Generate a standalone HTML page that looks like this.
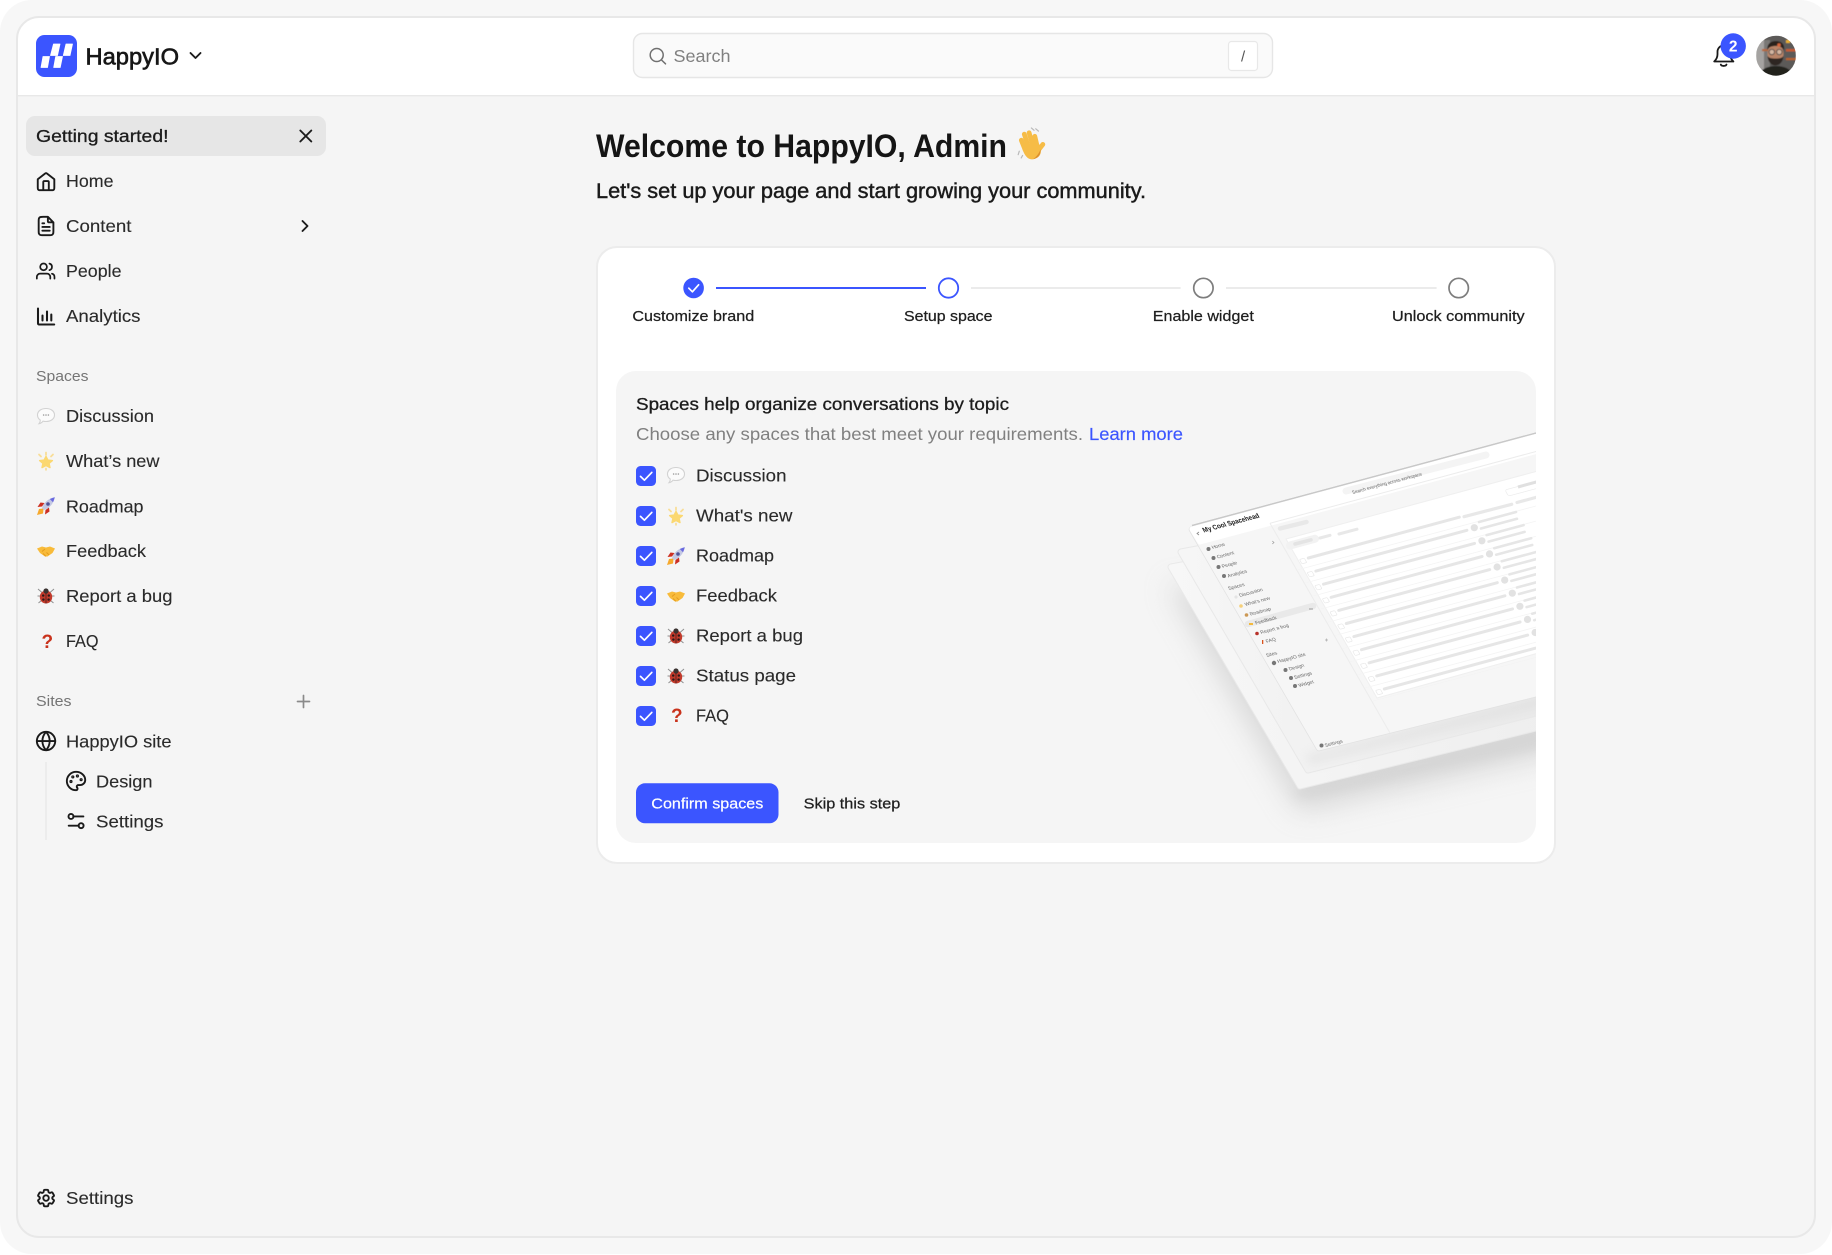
<!DOCTYPE html>
<html lang="en">
<head>
<meta charset="utf-8">
<title>HappyIO</title>
<style>
html,body{margin:0;padding:0;background:#fff;width:1832px;height:1255px;overflow:hidden}
svg{display:block}
text{font-family:"Liberation Sans",Arial,sans-serif;white-space:pre}
.t{font-size:17.5px;fill:#2a2a2a;stroke:#2a2a2a;stroke-width:.12}
.m{font-size:17.5px;fill:#1c1c1c;stroke:#1c1c1c;stroke-width:.3}
.s{font-size:15.2px;fill:#1f1f1f;stroke:#1f1f1f;stroke-width:.25}
.g{font-size:15.2px;fill:#757575}
.i{fill:none;stroke:#1a1a1a;stroke-width:2.05;stroke-linecap:round;stroke-linejoin:round}
.p{font-size:5px;fill:#666}
</style>
</head>
<body>
<svg xmlns="http://www.w3.org/2000/svg" width="1832" height="1255" viewBox="0 0 1832 1255">
<defs>
<clipPath id="panelClip"><rect x="616" y="371" width="920" height="472" rx="20"/></clipPath>
<clipPath id="avClip"><circle cx="1776" cy="55.7" r="20"/></clipPath>
<clipPath id="frameClip"><rect x="17" y="17" width="1798" height="1220" rx="22"/></clipPath>
<filter id="b14" x="-30%" y="-30%" width="160%" height="160%"><feGaussianBlur stdDeviation="14"/></filter>
<filter id="b6" x="-30%" y="-30%" width="160%" height="160%"><feGaussianBlur stdDeviation="5"/></filter>
<filter id="b1"><feGaussianBlur stdDeviation=".6"/></filter>
<linearGradient id="sh3" x1="0" y1="0" x2="1" y2="0"><stop offset="0" stop-color="#f7f7f7"/><stop offset="1" stop-color="#eeeeee"/></linearGradient>
<linearGradient id="sh2" x1="0" y1="0" x2="1" y2="0"><stop offset="0" stop-color="#f6f6f6"/><stop offset="1" stop-color="#e9e9e9"/></linearGradient>

<g id="e1"><path d="M-8.5-1c0-4 3.8-6.5 8.5-6.500S8.500-5 8.500-1 4.700 5.500 0 5.500c-1 0-2-.1-2.900-.4-1 1.200-2.600 2.400-4.100 2.600.8-1 1.300-2.200 1.300-3.600C-7.400 3-8.500 1-8.500-1z" fill="#fbfbfb" stroke="#d2d2d2" stroke-width="1.100"/><circle cx="-2.400" cy="-1" r=".8" fill="#9a9a9a"/><circle cx="0" cy="-1" r=".8" fill="#9a9a9a"/><circle cx="2.400" cy="-1" r=".8" fill="#9a9a9a"/></g>
<g id="e2"><path d="M0-4.600 1.900-.9 6.400-.4 3.100 2.400 4 6.600 0 4.500-4 6.600-3.100 2.400-6.400-.4-1.900-.9z" fill="#fbd871" stroke="#fbd871" stroke-width="1.400" stroke-linejoin="round"/><path d="M0-8.500v2.500M-7-6.500l2 2M7-6.500l-2 2M0 7.500v1.400" stroke="#f8de98" stroke-width="1.800" stroke-linecap="round"/></g>
<g id="e3"><path d="M-3 2.500-7 3-9 9-3 7.500-2.500 3z" fill="#f6a92d"/><path d="M-4 .5-8.500 1-5.500-3.500-1.500-3zM-.5 4-1 8.500 3.500 5.500 3 1.500z" fill="#cc3024"/><path d="M-4 2C-2.500-3 2-7.500 8.800-8.800 7.500-2 3 2.500-2 4z" fill="#c4c8e4"/><path d="M3.800-7C6-8 7.500-8.500 8.800-8.800 8.500-7.500 8-6 7-3.800z" fill="#6a6adf"/><circle cx="2" cy="-2" r="1.800" fill="#4f5398"/></g>
<g id="e4"><path d="M-9-2.500-4-4.500 0-3.500 4-4.500 9-2.500 6.500 2 1.500 5.500-1 5.500-6 2z" fill="#f8bb3a"/><path d="M-1-2-4 .5M0 5.400-3 2.500M3 3.800 .5 1.500" stroke="#e39a1e" stroke-width=".9" fill="none"/></g>
<g id="e5"><path d="M-8-7-4-3.500M8-7 4-3.500M-8.500 0h4M8.500 0h-4M-7.500 7-4 4M7.500 7 4 4" stroke="#8f8f8f" stroke-width="1" fill="none"/><ellipse cx="0" cy="1" rx="6.200" ry="6.500" fill="#c23a2b"/><circle cx="0" cy="-5" r="2.600" fill="#3a3230"/><circle cx="-2.800" cy="-.4" r="1.200" fill="#2a1a1a"/><circle cx="2.800" cy="-.4" r="1.200" fill="#2a1a1a"/><circle cx="-2.600" cy="3.600" r="1.200" fill="#2a1a1a"/><circle cx="2.600" cy="3.600" r="1.200" fill="#2a1a1a"/><path d="M0-3V7.500" stroke="#3a1a1a" stroke-width=".7"/></g>
<g id="ck"><rect x="-10" y="-10" width="20" height="20" rx="4.500" fill="#3b55ff"/><path d="M-5.500 .4-1.600 4.200 5.800-3.600" fill="none" stroke="#fff" stroke-width="1.700" stroke-linecap="round" stroke-linejoin="round"/></g>

<path id="gear" d="M9.594 3.940c.09-.542.56-.94 1.110-.94h2.593c.55 0 1.020.398 1.110.94l.213 1.281c.063.374.313.686.645.870.074.04.147.083.22.127.324.196.72.257 1.075.124l1.217-.456a1.125 1.125 0 011.370.49l1.296 2.247a1.125 1.125 0 01-.26 1.431l-1.003.827c-.293.24-.438.613-.431.992a6.759 6.759 0 010 .255c-.007.378.138.75.43.99l1.005.828c.424.35.534.954.26 1.430l-1.298 2.247a1.125 1.125 0 01-1.369.491l-1.217-.456c-.355-.133-.75-.072-1.076.124a6.570 6.570 0 01-.22.128c-.331.183-.581.495-.644.869l-.213 1.280c-.09.543-.56.941-1.110.941h-2.594c-.55 0-1.020-.398-1.110-.94l-.213-1.281c-.062-.374-.312-.686-.644-.87a6.520 6.520 0 01-.22-.127c-.325-.196-.72-.257-1.076-.124l-1.217.456a1.125 1.125 0 01-1.369-.49l-1.297-2.247a1.125 1.125 0 01.26-1.431l1.004-.827c.292-.24.437-.613.43-.992a6.932 6.932 0 010-.255c.007-.378-.138-.75-.43-.99l-1.004-.828a1.125 1.125 0 01-.26-1.430l1.297-2.247a1.125 1.125 0 011.370-.491l1.216.456c.356.133.751.072 1.076-.124.072-.044.146-.087.22-.128.332-.183.582-.495.644-.869l.214-1.281zM15 12a3 3 0 11-6 0 3 3 0 016 0z"/>

<g id="row" fill="none">
<line x1="1308.300" y1="558" x2="1459.300" y2="517.200" stroke="#e6e6e6" stroke-width="3" stroke-linecap="round"/>
<rect width="5" height="5" rx="1" x="0" y="0" transform="matrix(.966 -.26 .49 .87 1299.500 559.500)" fill="#fff" stroke="#e8e8e8" stroke-width=".7"/>
<line x1="1297" y1="570" x2="1536" y2="506" stroke="#f4f4f4" stroke-width=".8"/>
</g>
<g id="tail" fill="none">
<circle cx="1474.300" cy="527.700" r="3.600" fill="#e2e2e2"/>
<line x1="1479" y1="522" x2="1516" y2="512" stroke="#e6e6e6" stroke-width="2.600" stroke-linecap="round"/>
<line x1="1481" y1="528.500" x2="1517" y2="518.800" stroke="#e6e6e6" stroke-width="2.600" stroke-linecap="round"/>
</g>
</defs>

<!-- page -->
<rect width="1832" height="1255" fill="#fff"/>
<rect x="0" y="0" width="1832" height="1254" rx="32" fill="#f7f7f7"/>
<rect x="17" y="17" width="1798" height="1220" rx="22" fill="#f5f5f5"/>
<g clip-path="url(#frameClip)">
<rect x="17" y="17" width="1798" height="78" fill="#fff"/>
<rect x="17" y="95" width="1798" height="1.400" fill="#e8e8e8"/>
</g>
<rect x="17" y="17" width="1798" height="1220" rx="22" fill="none" stroke="#e8e8e8" stroke-width="2"/>

<!-- brand -->
<rect x="36" y="35" width="41" height="42" rx="8.500" fill="#3b55ff"/>
<g fill="#fff" stroke="#fff" stroke-width=".8" stroke-linejoin="round">
<polygon points="53.500,44 60,44 57.500,55.500 50.500,55.500"/>
<polygon points="66,44 72.500,44 70,55.500 63.300,55.500"/>
<polygon points="43,56.500 49.500,56.500 47.500,67.500 41,67.500"/>
<polygon points="55.700,56.500 62.500,56.500 60.200,67.500 53.700,67.500"/>
</g>
<text x="85.500" y="64.500" font-size="23.400" fill="#171717" stroke="#171717" stroke-width=".65" textLength="93.500" lengthAdjust="spacingAndGlyphs">HappyIO</text>
<path d="M190.500 53 195.500 58 200.500 53" fill="none" stroke="#1c1c1c" stroke-width="1.900" stroke-linecap="round" stroke-linejoin="round"/>

<!-- search -->
<rect x="633.500" y="33.500" width="639" height="44" rx="9" fill="#fafafa" stroke="#e6e6e6" stroke-width="1.400"/>
<circle cx="656.700" cy="55" r="6.500" fill="none" stroke="#707070" stroke-width="1.500"/>
<path d="M661.500 60 665.500 63.800" stroke="#707070" stroke-width="1.500" stroke-linecap="round"/>
<text x="673.500" y="62" font-size="17.500" fill="#808080" textLength="57" lengthAdjust="spacingAndGlyphs">Search</text>
<rect x="1228.500" y="41.500" width="29" height="29" rx="3" fill="#fff" stroke="#e8e8e8" stroke-width="1.200"/>
<text x="1241" y="61.500" font-size="15" fill="#555">/</text>

<!-- bell & avatar -->
<path d="M1714.200 61.500c2.200-2 3.300-4.200 3.300-7.200v-2.600a6.300 6.300 0 0 1 12.600 0v2.600c0 3 1.100 5.200 3.300 7.200z" fill="none" stroke="#1a1a1a" stroke-width="1.800" stroke-linejoin="round"/>
<path d="M1720.800 64.600c.7 1.800 5 1.800 5.700 0" fill="none" stroke="#1a1a1a" stroke-width="1.800" stroke-linecap="round"/>
<circle cx="1733.200" cy="46" r="12.700" fill="#3b55ff"/>
<text x="1733.200" y="51.500" font-size="15.500" font-weight="700" fill="#fff" text-anchor="middle">2</text>
<g clip-path="url(#avClip)">
<g filter="url(#b1)">
<rect x="1756" y="35" width="40" height="42" fill="#5c5a58"/>
<rect x="1756" y="35" width="8" height="42" fill="#a5a3a1"/>
<rect x="1764" y="40" width="6" height="32" fill="#7a7876"/>
<rect x="1786" y="49" width="11" height="2.500" fill="#c45a30"/>
<rect x="1786" y="58" width="11" height="2.200" fill="#b8622f"/>
<rect x="1762" y="49" width="6" height="2.200" fill="#b5683e"/>
<rect x="1786" y="40" width="4" height="3" fill="#e8b030"/>
<path d="M1758 77c2-8 10-11 18-11s16 3 18 11z" fill="#22201d"/>
<ellipse cx="1775.500" cy="54" rx="8" ry="10.500" fill="#b98468"/>
<path d="M1767.300 50c-.5-6 3.500-9 8.700-9 5 0 9 3 8 9-2-3-4.500-4-8.500-4s-6.500 1-8.200 4z" fill="#2a211d"/>
<circle cx="1779" cy="45" r="1.800" fill="#d8663a"/>
<path d="M1767.500 56c.5 6 4 9.500 8 9.500s7.500-3.500 8-9.500c-1.500 2-3.500 2.500-8 2.500s-6.500-.5-8-2.500z" fill="#2f2723"/>
<circle cx="1771.800" cy="52" r="2.700" fill="#d4b5a0" stroke="#444" stroke-width=".9"/>
<circle cx="1779.300" cy="52" r="2.700" fill="#d4b5a0" stroke="#444" stroke-width=".9"/>
</g>
</g>

<!-- sidebar -->
<rect x="26" y="116" width="300" height="40" rx="9" fill="#e6e6e6"/>
<text x="36" y="142" class="m" textLength="132.500" lengthAdjust="spacingAndGlyphs">Getting started!</text>
<path d="M300.300 130.500 311.300 141.500M311.300 130.500 300.300 141.500" fill="none" stroke="#1c1c1c" stroke-width="1.900" stroke-linecap="round"/>

<g transform="translate(35 170) scale(.92)" class="i"><path d="M9 21v-7.400c0-.56 0-.84.11-1.050.1-.19.25-.34.44-.44.21-.11.49-.11 1.050-.11h2.800c.56 0 .84 0 1.050.11.19.1.34.25.44.44.11.21.11.49.11 1.050V21"/><path d="M3 10.100l8.040-6.250c.35-.27.52-.4.71-.45.17-.05.34-.05.51 0 .19.05.36.18.71.45L21 10.100v8.700c0 1.120 0 1.680-.22 2.110-.19.38-.5.68-.87.87-.43.22-.99.22-2.110.22H6.200c-1.120 0-1.680 0-2.110-.22a2 2 0 0 1-.87-.87C3 20.480 3 19.920 3 18.800z"/></g>
<text x="66" y="187" class="t" textLength="47.500" lengthAdjust="spacingAndGlyphs">Home</text>

<g transform="translate(35 215) scale(.92)" class="i"><path d="M14 2.270V6.400c0 .56 0 .84.11 1.050.1.19.25.34.44.44.21.11.49.11 1.050.11h4.130M16 13H8M16 17H8M10 9H8M14 2H8.800c-1.680 0-2.520 0-3.160.33-.56.29-1.020.75-1.310 1.310C4 4.280 4 5.120 4 6.800v10.400c0 1.680 0 2.520.33 3.160.29.56.75 1.020 1.310 1.310.64.33 1.480.33 3.160.33h6.400c1.680 0 2.520 0 3.160-.33.56-.29 1.020-.75 1.310-1.310.33-.64.33-1.480.33-3.160V8z"/></g>
<text x="66" y="232" class="t" textLength="65.500" lengthAdjust="spacingAndGlyphs">Content</text>
<path d="M302.500 221 307.500 226 302.500 231" fill="none" stroke="#1c1c1c" stroke-width="1.900" stroke-linecap="round" stroke-linejoin="round"/>

<g transform="translate(36 261) scale(.84)" class="i" stroke-width="2.250"><path d="M22 21v-2a4 4 0 0 0-3-3.870M16 3.130a4 4 0 0 1 0 7.750M17 21v-2a4 4 0 0 0-4-4H5a4 4 0 0 0-4 4v2"/><circle cx="9" cy="7" r="4"/></g>
<text x="66" y="277" class="t" textLength="55.500" lengthAdjust="spacingAndGlyphs">People</text>

<g class="i" stroke-width="1.900"><path d="M38 308.500v14.800c0 .7.500 1.200 1.200 1.200h15"/><path d="M42.500 320.500v-5M47 320.500v-9M51.300 320.500v-6"/></g>
<text x="66" y="322" class="t" textLength="74.500" lengthAdjust="spacingAndGlyphs">Analytics</text>

<text x="36" y="381" class="g" textLength="52.500" lengthAdjust="spacingAndGlyphs">Spaces</text>
<use href="#e1" x="46" y="416"/>
<text x="66" y="422" class="t" textLength="88" lengthAdjust="spacingAndGlyphs">Discussion</text>
<use href="#e2" x="46" y="461"/>
<text x="66" y="467" class="t" textLength="93.500" lengthAdjust="spacingAndGlyphs">What’s new</text>
<use href="#e3" x="46" y="506"/>
<text x="66" y="512.300" class="t" textLength="77.500" lengthAdjust="spacingAndGlyphs">Roadmap</text>
<use href="#e4" x="46" y="551"/>
<text x="66" y="557" class="t" textLength="80" lengthAdjust="spacingAndGlyphs">Feedback</text>
<use href="#e5" x="46" y="596"/>
<text x="66" y="602" class="t" textLength="106.500" lengthAdjust="spacingAndGlyphs">Report a bug</text>
<text x="41.500" y="648" font-family="Liberation Serif" font-size="19" font-weight="700" fill="#c9321c">?</text>
<text x="66" y="647" class="t" textLength="32.500" lengthAdjust="spacingAndGlyphs">FAQ</text>

<text x="36" y="706" class="g" textLength="35.500" lengthAdjust="spacingAndGlyphs">Sites</text>
<path d="M303.500 695.500v12M297.500 701.500h12" stroke="#8a8a8a" stroke-width="1.700" stroke-linecap="round"/>

<g transform="translate(35 730) scale(.92)" class="i"><circle cx="12" cy="12" r="10"/><path d="M2 12h20M12 2a15.300 15.300 0 0 1 4 10 15.300 15.300 0 0 1-4 10 15.300 15.300 0 0 1-4-10 15.300 15.300 0 0 1 4-10z"/></g>
<text x="66" y="747.500" class="t" textLength="105.500" lengthAdjust="spacingAndGlyphs">HappyIO site</text>
<line x1="46" y1="762" x2="46" y2="840" stroke="#e8e8e8" stroke-width="1.300"/>

<g transform="translate(65 770) scale(.92)" class="i"><path d="M12 2C6.500 2 2 6.500 2 12s4.500 10 10 10c.926 0 1.648-.746 1.648-1.688 0-.437-.18-.835-.437-1.125-.29-.289-.438-.652-.438-1.125a1.640 1.640 0 0 1 1.668-1.668h1.996c3.051 0 5.555-2.503 5.555-5.554C21.965 6.012 17.461 2 12 2z"/><circle cx="13.500" cy="6.500" r=".7"/><circle cx="17.500" cy="10.500" r=".7"/><circle cx="8.500" cy="7.500" r=".7"/><circle cx="6.500" cy="12.500" r=".7"/></g>
<text x="96" y="787.500" class="t" textLength="56.500" lengthAdjust="spacingAndGlyphs">Design</text>

<g transform="translate(65 810) scale(.92)" class="i"><path d="M9 7h11M4 17h11"/><circle cx="6.500" cy="7" r="2.700"/><circle cx="17.500" cy="17" r="2.700"/></g>
<text x="96" y="827.500" class="t" textLength="67.500" lengthAdjust="spacingAndGlyphs">Settings</text>

<g transform="translate(35 1187) scale(.92)" class="i"><use href="#gear"/></g>
<text x="66" y="1204" class="t" textLength="67.500" lengthAdjust="spacingAndGlyphs">Settings</text>

<!-- welcome -->
<text x="596" y="157" font-size="32.700" font-weight="700" fill="#151515" textLength="411" lengthAdjust="spacingAndGlyphs">Welcome to HappyIO, Admin</text>
<g transform="translate(1030 145) rotate(-16)">
<path d="M-12 3-14 6M-10 8-12 10M10-14 12-11M6-16 8-13" stroke="#b9b9b9" stroke-width="1.200" stroke-linecap="round"/>
<g stroke="#f6bc46" stroke-width="4.800" stroke-linecap="round" fill="none">
<path d="M-6 3-7-7"/><path d="M-2 1-2.500-12"/><path d="M2.500 1 2.500-12"/><path d="M6.500 3 7-7"/><path d="M7 7 12.500 3"/>
</g>
<path d="M-8.500 2 9 1 9 8C8 13 4 15 -1 14.500-6 14-8 9-8.500 2z" fill="#f6bc46"/>
<path d="M9 7C8 12.500 3.500 15 -1 14.500 3 13 6 11 9 7z" fill="#dd8f2e"/>
</g>
<text x="596" y="198" font-size="21" fill="#1a1a1a" stroke="#1a1a1a" stroke-width=".45" textLength="550" lengthAdjust="spacingAndGlyphs">Let's set up your page and start growing your community.</text>

<!-- card -->
<rect x="597" y="247" width="958" height="616" rx="20" fill="#fff" stroke="#ececec" stroke-width="2"/>

<!-- stepper -->
<circle cx="693.600" cy="288" r="10.300" fill="#3b55ff"/>
<path d="M688.800 288.200 692.400 291.800 698.600 284.800" fill="none" stroke="#fff" stroke-width="1.700" stroke-linecap="round" stroke-linejoin="round"/>
<line x1="716" y1="288" x2="926" y2="288" stroke="#3b55ff" stroke-width="2"/>
<circle cx="948.500" cy="288" r="9.700" fill="#fff" stroke="#3b55ff" stroke-width="1.800"/>
<line x1="971" y1="288" x2="1180.600" y2="288" stroke="#e8e8e8" stroke-width="1.800"/>
<circle cx="1203.400" cy="288" r="9.700" fill="#fff" stroke="#7d7d7d" stroke-width="1.700"/>
<line x1="1226" y1="288" x2="1436.600" y2="288" stroke="#e8e8e8" stroke-width="1.800"/>
<circle cx="1458.700" cy="288" r="9.700" fill="#fff" stroke="#7d7d7d" stroke-width="1.700"/>
<text x="632.400" y="321" class="s" textLength="121.800" lengthAdjust="spacingAndGlyphs">Customize brand</text>
<text x="904" y="321" class="s" textLength="88.500" lengthAdjust="spacingAndGlyphs">Setup space</text>
<text x="1152.800" y="321" class="s" textLength="101" lengthAdjust="spacingAndGlyphs">Enable widget</text>
<text x="1392" y="321" class="s" textLength="132.600" lengthAdjust="spacingAndGlyphs">Unlock community</text>

<!-- panel -->
<rect x="616" y="371" width="920" height="472" rx="20" fill="#f5f5f5"/>

<g clip-path="url(#panelClip)">
  <!-- shadows -->
  <polygon points="1168,585 1300,812 1560,752 1560,620" fill="#bcbcbc" opacity=".5" filter="url(#b14)"/>
  <polygon points="1290,792 1560,727 1560,745 1300,800" fill="#c9c9c9" opacity=".3" filter="url(#b6)"/>
  <!-- sheet 3 -->
  <polygon points="1171,567 1300,786 1560,722 1560,495" fill="#e9e9e9" stroke="#e9e9e9" stroke-width="7" stroke-linejoin="round"/>
  <polygon points="1171,567 1300,786 1560,722 1560,495" fill="url(#sh3)" stroke="url(#sh3)" stroke-width="5" stroke-linejoin="round"/>
  <!-- sheet 2 -->
  <polygon points="1181,552 1308,770 1560,707 1560,480" fill="#e8e8e8" stroke="#e8e8e8" stroke-width="7" stroke-linejoin="round"/>
  <polygon points="1181,552 1308,770 1560,707 1560,480" fill="url(#sh2)" stroke="url(#sh2)" stroke-width="5" stroke-linejoin="round"/>
  <polygon points="1305,755 1560,692 1560,702 1310,765" fill="#c9c9c9" opacity=".25" filter="url(#b6)"/>
  <!-- sheet 1 -->
  <polygon points="1192,529.500 1319,748 1560,688 1560,430" fill="#e2e2e2" stroke="#e2e2e2" stroke-width="6.500" stroke-linejoin="round"/>
  <polygon points="1192,529.500 1319,748 1560,688 1560,430" fill="#f6f6f6" stroke="#f6f6f6" stroke-width="5" stroke-linejoin="round"/>
  <line x1="1192" y1="525.500" x2="1560" y2="426.500" stroke="#c8c8c8" stroke-width="1.200"/>
  <polygon points="1192,529 1560,430 1560,445 1270,523.300 1200,542" fill="#fff" stroke="#fff" stroke-width="5" stroke-linejoin="round"/>
  <line x1="1192" y1="525.500" x2="1560" y2="426.500" stroke="#c8c8c8" stroke-width="1.200"/>
  <line x1="1270" y1="523.300" x2="1390" y2="733" stroke="#ececec" stroke-width="1"/>
  <line x1="1270" y1="523.300" x2="1560" y2="445" stroke="#ececec" stroke-width="1"/>

  <!-- header contents -->
  <line x1="1346" y1="491" x2="1486" y2="455" stroke="#f4f4f4" stroke-width="7" stroke-linecap="round"/>
  <text class="p" transform="matrix(.966 -.26 .49 .87 1353 494)" textLength="72" lengthAdjust="spacingAndGlyphs" fill="#999">Search everything across workspace</text>
  <text transform="matrix(.966 -.26 .49 .87 1204 532.500)" font-size="7.300" font-weight="700" fill="#1a1a1a" textLength="58" lengthAdjust="spacingAndGlyphs">My Cool Spacehead</text>
  <path d="M1199 532 1197 533.500 1199 535" fill="none" stroke="#888" stroke-width=".8"/>

  <!-- highlight -->
  <line x1="1248" y1="624" x2="1313" y2="606" stroke="#e9e9e9" stroke-width="6.500" stroke-linecap="round"/>

  <!-- sidebar labels -->
  <g>
  <text class="p" transform="matrix(.966 -.26 .49 .87 1212.700 549)">Home</text>
  <text class="p" transform="matrix(.966 -.26 .49 .87 1217.700 558.500)">Content</text>
  <text class="p" transform="matrix(.966 -.26 .49 .87 1222.700 568)">People</text>
  <text class="p" transform="matrix(.966 -.26 .49 .87 1228.300 577.500)">Analytics</text>
  <text class="p" font-size="4" transform="matrix(.966 -.26 .49 .87 1229 590)" fill="#999">Spaces</text>
  <text class="p" transform="matrix(.966 -.26 .49 .87 1240 597)">Discussion</text>
  <text class="p" transform="matrix(.966 -.26 .49 .87 1245.700 606)">What's new</text>
  <text class="p" transform="matrix(.966 -.26 .49 .87 1250.700 615.700)">Roadmap</text>
  <text class="p" transform="matrix(.966 -.26 .49 .87 1256 624.500)" fill="#333">Feedback</text>
  <text class="p" transform="matrix(.966 -.26 .49 .87 1261.300 634)">Report a bug</text>
  <text class="p" transform="matrix(.966 -.26 .49 .87 1266.700 643)">FAQ</text>
  <text class="p" font-size="4" transform="matrix(.966 -.26 .49 .87 1267 657)" fill="#999">Sites</text>
  <text class="p" transform="matrix(.966 -.26 .49 .87 1278.300 663)">HappyIO site</text>
  <text class="p" transform="matrix(.966 -.26 .49 .87 1289.700 670.500)">Design</text>
  <text class="p" transform="matrix(.966 -.26 .49 .87 1295 679)">Settings</text>
  <text class="p" transform="matrix(.966 -.26 .49 .87 1299.300 687)">Widget</text>
  <text class="p" transform="matrix(.966 -.26 .49 .87 1325.700 747)">Settings</text>
  </g>
  <!-- sidebar tiny icons -->
  <g fill="#777">
  <circle cx="1208.500" cy="549" r="2"/><circle cx="1213.500" cy="558" r="2"/><circle cx="1218.500" cy="567" r="2"/><circle cx="1224" cy="576" r="2"/>
  <circle cx="1236" cy="597" r="1.600" fill="#e4e4e4"/><circle cx="1241" cy="606" r="1.800" fill="#f5d07a"/>
  <circle cx="1246.500" cy="615" r="1.800" fill="#c95"/><rect x="1249" y="623" width="4" height="2" fill="#f3b93d"/>
  <circle cx="1257" cy="633.500" r="1.800" fill="#b8322a"/><rect x="1262" y="640" width="1.300" height="4" fill="#d9541e"/>
  <circle cx="1274" cy="663" r="2.200"/><circle cx="1285.500" cy="670" r="2"/><circle cx="1291" cy="678" r="2"/><circle cx="1295" cy="686" r="2"/><circle cx="1321.500" cy="745.500" r="2"/>
  </g>
  <path d="M1272.300 541 1274 542.500 1272.300 544" fill="none" stroke="#999" stroke-width=".7"/>
  <path d="M1325 640h3M1326.500 638.500v3" stroke="#aaa" stroke-width=".7"/>
  <path d="M1309 609h4" stroke="#888" stroke-width=".8"/>

  <!-- list -->
  <polygon points="1286,539 1560,465 1560,647 1377,698" fill="#fff" stroke="#efefef" stroke-width="1" stroke-linejoin="round"/>
  <line x1="1280" y1="528.500" x2="1306.500" y2="522" stroke="#e8e8e8" stroke-width="4.500" stroke-linecap="round"/>
  <line x1="1290" y1="545.500" x2="1315" y2="538.800" stroke="#f2f2f2" stroke-width="8" stroke-linecap="round"/>
  <line x1="1295" y1="544" x2="1311" y2="539.800" stroke="#e4e4e4" stroke-width="3.500" stroke-linecap="round"/>
  <line x1="1320" y1="538" x2="1330" y2="535.300" stroke="#e8e8e8" stroke-width="3" stroke-linecap="round"/>
  <line x1="1339" y1="534" x2="1357" y2="529.200" stroke="#e8e8e8" stroke-width="3" stroke-linecap="round"/>
  <line x1="1464" y1="516.700" x2="1511.700" y2="504.300" stroke="#e8e8e8" stroke-width="3.200" stroke-linecap="round"/>
  <line x1="1517" y1="502.500" x2="1540" y2="496.300" stroke="#e8e8e8" stroke-width="3.200" stroke-linecap="round"/>
  <rect x="0" y="0" width="40" height="7" rx="2" transform="matrix(.966 -.26 .49 .87 1505 490)" fill="#fff" stroke="#ececec" stroke-width=".7"/>
  <line x1="1518" y1="487" x2="1540" y2="481" stroke="#e0e0e0" stroke-width="3"/>
  <use href="#row"/>
  <use href="#row" x="7.600" y="13.100"/>
  <use href="#row" x="15.200" y="26.200"/>
  <use href="#row" x="22.800" y="39.300"/>
  <use href="#row" x="30.400" y="52.400"/>
  <use href="#row" x="38" y="65.500"/>
  <use href="#row" x="45.600" y="78.600"/>
  <use href="#row" x="53.200" y="91.700"/>
  <use href="#row" x="60.800" y="104.800"/>
  <use href="#row" x="68.400" y="117.900"/>
  <use href="#row" x="76" y="131"/>
  <use href="#tail"/>
  <use href="#tail" x="7.600" y="13.100"/>
  <use href="#tail" x="15.200" y="26.200"/>
  <use href="#tail" x="22.800" y="39.300"/>
  <use href="#tail" x="30.400" y="52.400"/>
  <use href="#tail" x="38" y="65.500"/>
  <use href="#tail" x="45.600" y="78.600"/>
  <use href="#tail" x="53.200" y="91.700"/>
  <use href="#tail" x="60.800" y="104.800"/>
</g>

<!-- panel text -->
<text x="636" y="410" class="m" textLength="373" lengthAdjust="spacingAndGlyphs">Spaces help organize conversations by topic</text>
<text x="636" y="440" font-size="17.500" fill="#808080" textLength="447" lengthAdjust="spacingAndGlyphs">Choose any spaces that best meet your requirements.</text>
<text x="1089" y="440" font-size="17.500" fill="#3b55ff" stroke="#3b55ff" stroke-width=".15" textLength="94" lengthAdjust="spacingAndGlyphs">Learn more</text>

<use href="#ck" x="646" y="476"/><use href="#e1" x="676" y="475"/>
<text x="696" y="481.500" class="t" textLength="90.500" lengthAdjust="spacingAndGlyphs">Discussion</text>
<use href="#ck" x="646" y="516"/><use href="#e2" x="676" y="516"/>
<text x="696" y="521.500" class="t" textLength="96.500" lengthAdjust="spacingAndGlyphs">What's new</text>
<use href="#ck" x="646" y="556"/><use href="#e3" x="676" y="556"/>
<text x="696" y="561.500" class="t" textLength="78" lengthAdjust="spacingAndGlyphs">Roadmap</text>
<use href="#ck" x="646" y="596"/><use href="#e4" x="676" y="596"/>
<text x="696" y="601.500" class="t" textLength="81" lengthAdjust="spacingAndGlyphs">Feedback</text>
<use href="#ck" x="646" y="636"/><use href="#e5" x="676" y="636"/>
<text x="696" y="641.500" class="t" textLength="107" lengthAdjust="spacingAndGlyphs">Report a bug</text>
<use href="#ck" x="646" y="676"/><use href="#e5" x="676" y="676"/>
<text x="696" y="681.500" class="t" textLength="100" lengthAdjust="spacingAndGlyphs">Status page</text>
<use href="#ck" x="646" y="716"/>
<text x="671" y="722" font-family="Liberation Serif" font-size="19" font-weight="700" fill="#c9321c">?</text>
<text x="696" y="721.500" class="t" textLength="33" lengthAdjust="spacingAndGlyphs">FAQ</text>

<!-- buttons -->
<rect x="636" y="783.300" width="142.500" height="40" rx="9" fill="#3b55ff"/>
<text x="651.300" y="808.500" font-size="15.200" fill="#fff" stroke="#fff" stroke-width=".2" textLength="112" lengthAdjust="spacingAndGlyphs">Confirm spaces</text>
<text x="803.700" y="808.500" class="s" textLength="96.600" lengthAdjust="spacingAndGlyphs">Skip this step</text>
</svg>
</body>
</html>
